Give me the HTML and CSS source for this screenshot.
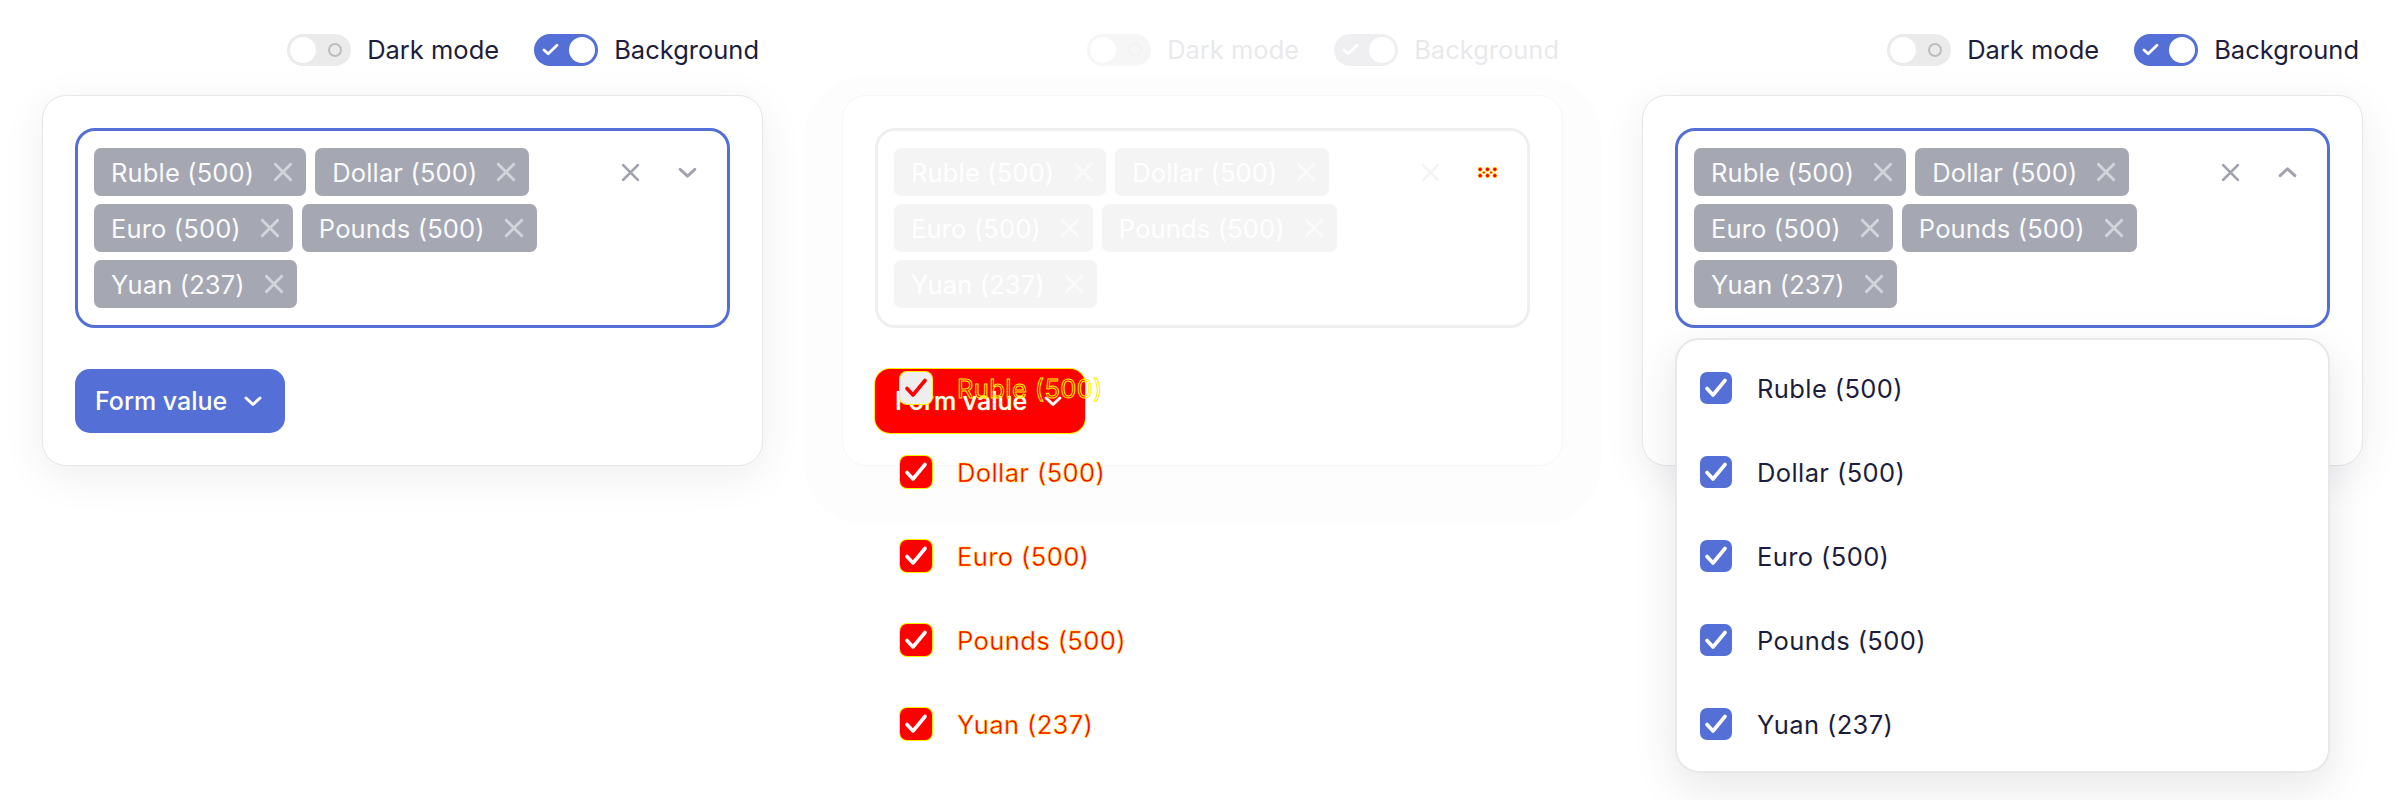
FILE: index.html
```html
<!DOCTYPE html>
<html lang="en">
<head>
<meta charset="utf-8">
<title>Multiselect</title>
<link rel="stylesheet" href="styles.css">
</head>
<body>
<div class="stage">

  <!-- Panel 1: closed -->
  <section class="panel">
    <div class="toolbar">
      <label class="switch-row">
        <span class="switch"><span class="switch-dot"></span><span class="knob"></span></span>
        <span class="switch-label">Dark mode</span>
      </label>
      <label class="switch-row">
        <span class="switch switch--on"><svg class="switch-check" viewBox="0 0 18 14"><path d="M2 7.5l4.5 4L16 2.5"/></svg><span class="knob"></span></span>
        <span class="switch-label">Background</span>
      </label>
    </div>
    <div class="card">
      <div class="select-wrap">
        <div class="select">
          <div class="tags">
            <span class="tag">Ruble (500)<svg class="tag-x" viewBox="0 0 20 20"><path d="M3 3l14 14M17 3L3 17"/></svg></span>
            <span class="tag">Dollar (500)<svg class="tag-x" viewBox="0 0 20 20"><path d="M3 3l14 14M17 3L3 17"/></svg></span>
            <span class="tag">Euro (500)<svg class="tag-x" viewBox="0 0 20 20"><path d="M3 3l14 14M17 3L3 17"/></svg></span>
            <span class="tag">Pounds (500)<svg class="tag-x" viewBox="0 0 20 20"><path d="M3 3l14 14M17 3L3 17"/></svg></span>
            <span class="tag">Yuan (237)<svg class="tag-x" viewBox="0 0 20 20"><path d="M3 3l14 14M17 3L3 17"/></svg></span>
          </div>
          <div class="select-icons">
            <span class="icon-box"><svg class="icon-clear" viewBox="0 0 20 20"><path d="M3 3l14 14M17 3L3 17"/></svg></span>
            <span class="icon-box"><svg class="icon-chev" viewBox="0 0 20 12"><path d="M3 3l7 6.5L17 3"/></svg></span>
          </div>
        </div>
      </div>
      <button class="btn">Form value<svg class="btn-chev" viewBox="0 0 20 12"><path d="M3 3l7 6.5L17 3"/></svg></button>
    </div>
  </section>

  <!-- Panel 2: diff -->
  <section class="panel panel--diff">
    <div class="toolbar">
      <label class="switch-row">
        <span class="switch"><span class="switch-dot"></span><span class="knob"></span></span>
        <span class="switch-label">Dark mode</span>
      </label>
      <label class="switch-row">
        <span class="switch switch--on"><svg class="switch-check" viewBox="0 0 18 14"><path d="M2 7.5l4.5 4L16 2.5"/></svg><span class="knob"></span></span>
        <span class="switch-label">Background</span>
      </label>
    </div>
    <div class="card">
      <div class="select-wrap">
        <div class="select">
          <div class="tags">
            <span class="tag">Ruble (500)<svg class="tag-x" viewBox="0 0 20 20"><path d="M3 3l14 14M17 3L3 17"/></svg></span>
            <span class="tag">Dollar (500)<svg class="tag-x" viewBox="0 0 20 20"><path d="M3 3l14 14M17 3L3 17"/></svg></span>
            <span class="tag">Euro (500)<svg class="tag-x" viewBox="0 0 20 20"><path d="M3 3l14 14M17 3L3 17"/></svg></span>
            <span class="tag">Pounds (500)<svg class="tag-x" viewBox="0 0 20 20"><path d="M3 3l14 14M17 3L3 17"/></svg></span>
            <span class="tag">Yuan (237)<svg class="tag-x" viewBox="0 0 20 20"><path d="M3 3l14 14M17 3L3 17"/></svg></span>
          </div>
          <div class="select-icons">
            <span class="icon-box"><svg class="icon-clear" viewBox="0 0 20 20"><path d="M3 3l14 14M17 3L3 17"/></svg></span>
            <span class="icon-box"><svg class="icon-dots" viewBox="0 0 20 12"><circle cx="3" cy="3" r="2"/><circle cx="10" cy="3" r="2"/><circle cx="17" cy="3" r="2"/><circle cx="3" cy="9" r="2"/><circle cx="10" cy="9" r="2"/><circle cx="17" cy="9" r="2"/><circle cx="6.5" cy="6" r="1.3"/><circle cx="13.5" cy="6" r="1.3"/></svg></span>
          </div>
        </div>
        <div class="dropdown dropdown--diff">
          <div class="option option--ghost"><span class="checkbox"><svg viewBox="0 0 32 32"><path d="M7 16.5l6 6.5L25 8.5"/></svg></span><span class="option-label">Ruble (500)</span></div>
          <div class="option"><span class="checkbox"><svg viewBox="0 0 32 32"><path d="M7 16.5l6 6.5L25 8.5"/></svg></span><span class="option-label">Dollar (500)</span></div>
          <div class="option"><span class="checkbox"><svg viewBox="0 0 32 32"><path d="M7 16.5l6 6.5L25 8.5"/></svg></span><span class="option-label">Euro (500)</span></div>
          <div class="option"><span class="checkbox"><svg viewBox="0 0 32 32"><path d="M7 16.5l6 6.5L25 8.5"/></svg></span><span class="option-label">Pounds (500)</span></div>
          <div class="option"><span class="checkbox"><svg viewBox="0 0 32 32"><path d="M7 16.5l6 6.5L25 8.5"/></svg></span><span class="option-label">Yuan (237)</span></div>
        </div>
      </div>
      <button class="btn">Form value<svg class="btn-chev" viewBox="0 0 20 12"><path d="M3 3l7 6.5L17 3"/></svg></button>
    </div>
  </section>

  <!-- Panel 3: open -->
  <section class="panel">
    <div class="toolbar">
      <label class="switch-row">
        <span class="switch"><span class="switch-dot"></span><span class="knob"></span></span>
        <span class="switch-label">Dark mode</span>
      </label>
      <label class="switch-row">
        <span class="switch switch--on"><svg class="switch-check" viewBox="0 0 18 14"><path d="M2 7.5l4.5 4L16 2.5"/></svg><span class="knob"></span></span>
        <span class="switch-label">Background</span>
      </label>
    </div>
    <div class="card">
      <div class="select-wrap">
        <div class="select">
          <div class="tags">
            <span class="tag">Ruble (500)<svg class="tag-x" viewBox="0 0 20 20"><path d="M3 3l14 14M17 3L3 17"/></svg></span>
            <span class="tag">Dollar (500)<svg class="tag-x" viewBox="0 0 20 20"><path d="M3 3l14 14M17 3L3 17"/></svg></span>
            <span class="tag">Euro (500)<svg class="tag-x" viewBox="0 0 20 20"><path d="M3 3l14 14M17 3L3 17"/></svg></span>
            <span class="tag">Pounds (500)<svg class="tag-x" viewBox="0 0 20 20"><path d="M3 3l14 14M17 3L3 17"/></svg></span>
            <span class="tag">Yuan (237)<svg class="tag-x" viewBox="0 0 20 20"><path d="M3 3l14 14M17 3L3 17"/></svg></span>
          </div>
          <div class="select-icons">
            <span class="icon-box"><svg class="icon-clear" viewBox="0 0 20 20"><path d="M3 3l14 14M17 3L3 17"/></svg></span>
            <span class="icon-box"><svg class="icon-chev" viewBox="0 0 20 12"><path d="M3 9l7-6.5L17 9"/></svg></span>
          </div>
        </div>
        <div class="dropdown">
          <div class="option"><span class="checkbox"><svg viewBox="0 0 32 32"><path d="M7 16.5l6 6.5L25 8.5"/></svg></span><span class="option-label">Ruble (500)</span></div>
          <div class="option"><span class="checkbox"><svg viewBox="0 0 32 32"><path d="M7 16.5l6 6.5L25 8.5"/></svg></span><span class="option-label">Dollar (500)</span></div>
          <div class="option"><span class="checkbox"><svg viewBox="0 0 32 32"><path d="M7 16.5l6 6.5L25 8.5"/></svg></span><span class="option-label">Euro (500)</span></div>
          <div class="option"><span class="checkbox"><svg viewBox="0 0 32 32"><path d="M7 16.5l6 6.5L25 8.5"/></svg></span><span class="option-label">Pounds (500)</span></div>
          <div class="option"><span class="checkbox"><svg viewBox="0 0 32 32"><path d="M7 16.5l6 6.5L25 8.5"/></svg></span><span class="option-label">Yuan (237)</span></div>
        </div>
      </div>
      <button class="btn">Form value<svg class="btn-chev" viewBox="0 0 20 12"><path d="M3 3l7 6.5L17 3"/></svg></button>
    </div>
  </section>

</div>
</body>
</html>
```

FILE: styles.css
```css
* { box-sizing: border-box; }

html, body {
  margin: 0;
  background: #ffffff;
}

body {
  font-family: Inter, "Noto Sans", "Liberation Sans", sans-serif;
  font-size: 25.5px;
  color: #1c1d3b;
}

.stage {
  display: flex;
  width: 2400px;
  height: 800px;
  overflow: hidden;
}

.panel {
  width: 800px;
  flex: none;
  padding: 34px 37px 0 42px;
}

/* toolbar */
.toolbar {
  display: flex;
  justify-content: flex-end;
  align-items: center;
  gap: 35px;
  height: 32px;
  margin: 0 4px 29px 0;
}

.switch-row {
  display: flex;
  align-items: center;
  gap: 16px;
}

.switch {
  position: relative;
  width: 64px;
  height: 32px;
  border-radius: 16px;
  background: #ebebeb;
  display: flex;
  align-items: center;
  flex: none;
}

.knob {
  position: absolute;
  left: 3px;
  top: 3px;
  width: 26px;
  height: 26px;
  border-radius: 50%;
  background: #ffffff;
}

.switch-dot {
  position: absolute;
  right: 9px;
  top: 9px;
  width: 14px;
  height: 14px;
  border-radius: 50%;
  border: 2px solid #bdbdbd;
}

.switch--on {
  background: #5470d6;
}

.switch--on .knob {
  left: auto;
  right: 3px;
}

.switch-check {
  position: absolute;
  left: 8px;
  top: 9px;
  width: 17px;
  height: 13px;
  fill: none;
  stroke: #ffffff;
  stroke-width: 3;
  stroke-linecap: round;
  stroke-linejoin: round;
}

.switch-label {
  line-height: 32px;
  color: #1c1d3b;
}

/* card */
.card {
  background: #ffffff;
  border: 1px solid #e6e6e8;
  border-radius: 24px;
  padding: 32px;
  box-shadow: 0 10px 44px rgba(20, 20, 40, 0.07);
}

.select-wrap {
  position: relative;
}

.select {
  display: flex;
  align-items: flex-start;
  border: 3px solid #5470d6;
  border-radius: 20px;
  padding: 17px 29px 17px 16px;
  background: #ffffff;
}

.tags {
  flex: 1;
  display: flex;
  flex-wrap: wrap;
  gap: 8px 9px;
  padding-right: 70px;
}

.tag {
  display: inline-flex;
  align-items: center;
  height: 48px;
  padding: 0 12px 0 17px;
  gap: 18px;
  border-radius: 7px;
  background: #a5a7b2;
  color: #fafafc;
  white-space: nowrap;
  letter-spacing: 0.15px;
}

.tag-x {
  width: 22px;
  height: 22px;
  fill: none;
  stroke: #d4d5db;
  stroke-width: 2.6;
  stroke-linecap: round;
}

.select-icons {
  display: flex;
  gap: 36px;
  flex: none;
}

.icon-box {
  height: 48px;
  display: flex;
  align-items: center;
}

.icon-clear {
  width: 21px;
  height: 21px;
  fill: none;
  stroke: #a0a2ae;
  stroke-width: 2.6;
  stroke-linecap: round;
}

.icon-chev {
  width: 21px;
  height: 13px;
  fill: none;
  stroke: #a0a2ae;
  stroke-width: 2.8;
  stroke-linecap: round;
  stroke-linejoin: round;
}

.icon-dots {
  width: 21px;
  height: 13px;
  fill: #ff0000;
  stroke: #ffee00;
  stroke-width: 0.6;
}

/* button */
.btn {
  display: inline-flex;
  align-items: center;
  gap: 16px;
  height: 64px;
  margin-top: 41px;
  padding: 0 22px 0 20px;
  border: none;
  border-radius: 15px;
  background: #5470d6;
  color: #ffffff;
  font-family: inherit;
  font-size: 25px;
  font-weight: 500;
}

.btn-chev {
  width: 20px;
  height: 12px;
  fill: none;
  stroke: #ffffff;
  stroke-width: 3;
  stroke-linecap: round;
  stroke-linejoin: round;
}

/* dropdown */
.dropdown {
  position: absolute;
  left: 0;
  right: 0;
  top: calc(100% + 10px);
  background: #ffffff;
  border: 2px solid #e8e8ea;
  border-radius: 24px;
  padding: 6px 0 5px;
  box-shadow: 0 14px 44px rgba(20, 20, 40, 0.1);
  z-index: 2;
}

.option {
  display: flex;
  align-items: center;
  gap: 25px;
  height: 84px;
  padding-left: 23px;
}

.checkbox {
  width: 32px;
  height: 32px;
  border-radius: 7px;
  background: #5470d6;
  display: flex;
  align-items: center;
  justify-content: center;
  flex: none;
}

.checkbox svg {
  width: 32px;
  height: 32px;
  fill: none;
  stroke: #ffffff;
  stroke-width: 3.6;
  stroke-linecap: round;
  stroke-linejoin: round;
}

.option-label {
  color: #1c1d3b;
  letter-spacing: 0.4px;
}

/* diff panel */
.panel--diff .switch { background: #f6f6f6; }
.panel--diff .switch--on { background: #efeff1; }
.panel--diff .switch-dot { border-color: #f2f2f2; }
.panel--diff .switch-label { color: #e9e9ec; }
.panel--diff .card {
  border-color: #f6f6f6;
  box-shadow: 0 20px 0 38px #fdfdfd;
}
.panel--diff .select { border-color: #efefef; }
.panel--diff .tag { background: #f4f4f5; color: #ffffff; }
.panel--diff .tag-x { stroke: #fafafa; }
.panel--diff .icon-clear { stroke: #f4f4f5; }
.panel--diff .btn {
  background: #ff0000;
  box-shadow: 0 0 0 1px #ffee00;
  color: #ffffff;
  text-shadow: 0 0 1px #ffee00;
}
.dropdown--diff {
  background: transparent;
  border-color: transparent;
  box-shadow: none;
}
.dropdown--diff .checkbox {
  background: #ff0000;
  box-shadow: 0 0 0 1px #ffee00;
}
.dropdown--diff .option-label {
  color: #ff0000;
  -webkit-text-stroke: 0.5px #ffdd00;
}
.dropdown--diff .option--ghost .checkbox {
  background: #eeeeee;
  box-shadow: 0 0 0 1px #ffee00;
}
.dropdown--diff .option--ghost .checkbox svg { stroke: #ff0000; }
.dropdown--diff .option--ghost .option-label {
  color: transparent;
  -webkit-text-stroke: 1px #ffee00;
}
```
